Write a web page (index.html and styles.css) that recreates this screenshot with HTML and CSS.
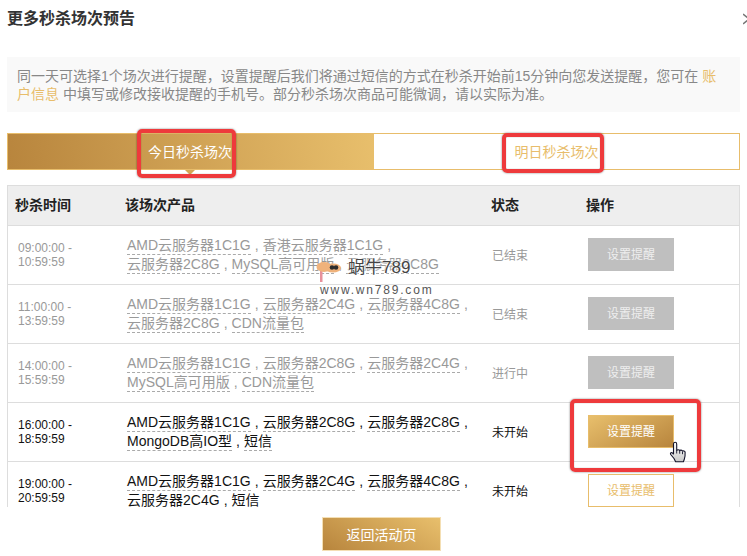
FILE: index.html
```html
<!DOCTYPE html>
<html lang="zh-CN">
<head>
<meta charset="utf-8">
<title>更多秒杀场次预告</title>
<link rel="stylesheet" href="styles.css">
</head>
<body>
<div class="modal">
  <header class="head">
    <h1 class="title">更多秒杀场次预告</h1>
    <svg class="close" width="6" height="12" viewBox="0 0 6 12"><path d="M0 1l6 5-6 5" fill="none" stroke="#777" stroke-width="1.500"/></svg>
  </header>
  <p class="notice">同一天可选择1个场次进行提醒，设置提醒后我们将通过短信的方式在秒杀开始前15分钟向您发送提醒，您可在 <a class="link">账户信息</a> 中填写或修改接收提醒的手机号。部分秒杀场次商品可能微调，请以实际为准。</p>
  <div class="tabs">
    <div class="tab tab-on">今日秒杀场次</div>
    <div class="tab">明日秒杀场次</div>
  </div>
  <div class="scroll">
    <table class="grid">
      <colgroup><col class="c1"><col class="c2"><col class="c3"><col class="c4"></colgroup>
      <thead>
        <tr><th>秒杀时间</th><th>该场次产品</th><th>状态</th><th>操作</th></tr>
      </thead>
      <tbody>
        <tr class="past">
          <td class="time">09:00:00 - 10:59:59</td>
          <td class="prod"><span class="item">AMD云服务器1C1G</span><span class="sep">,</span><span class="item">香港云服务器1C1G</span><span class="sep">,</span><span class="item">云服务器2C8G</span><span class="sep">,</span><span class="item">MySQL高可用版</span><span class="sep">,</span><span class="item">云服务器2C8G</span></td>
          <td class="state">已结束</td>
          <td class="act"><button class="btn btn-off">设置提醒</button></td>
        </tr>
        <tr class="past">
          <td class="time">11:00:00 - 13:59:59</td>
          <td class="prod"><span class="item">AMD云服务器1C1G</span><span class="sep">,</span><span class="item">云服务器2C4G</span><span class="sep">,</span><span class="item">云服务器4C8G</span><span class="sep">,</span><span class="item">云服务器2C8G</span><span class="sep">,</span><span class="item">CDN流量包</span></td>
          <td class="state">已结束</td>
          <td class="act"><button class="btn btn-off">设置提醒</button></td>
        </tr>
        <tr class="past">
          <td class="time">14:00:00 - 15:59:59</td>
          <td class="prod"><span class="item">AMD云服务器1C1G</span><span class="sep">,</span><span class="item">云服务器2C8G</span><span class="sep">,</span><span class="item">云服务器2C4G</span><span class="sep">,</span><span class="item">MySQL高可用版</span><span class="sep">,</span><span class="item">CDN流量包</span></td>
          <td class="state">进行中</td>
          <td class="act"><button class="btn btn-off">设置提醒</button></td>
        </tr>
        <tr>
          <td class="time">16:00:00 - 18:59:59</td>
          <td class="prod"><span class="item">AMD云服务器1C1G</span><span class="sep">,</span><span class="item">云服务器2C8G</span><span class="sep">,</span><span class="item">云服务器2C8G</span><span class="sep">,</span><span class="item">MongoDB高IO型</span><span class="sep">,</span><span class="item">短信</span></td>
          <td class="state">未开始</td>
          <td class="act"><button class="btn btn-hover">设置提醒</button></td>
        </tr>
        <tr>
          <td class="time">19:00:00 - 20:59:59</td>
          <td class="prod"><span class="item">AMD云服务器1C1G</span><span class="sep">,</span><span class="item">云服务器2C4G</span><span class="sep">,</span><span class="item">云服务器4C8G</span><span class="sep">,</span><span class="item">云服务器2C4G</span><span class="sep">,</span><span class="item">短信</span></td>
          <td class="state">未开始</td>
          <td class="act"><button class="btn btn-line">设置提醒</button></td>
        </tr>
      </tbody>
    </table>
  </div>
  <footer class="foot"><button class="back">返回活动页</button></footer>
</div>

<div class="mark mark-a"></div>
<div class="mark mark-b"></div>
<div class="mark mark-c"></div>

<div class="wm">
  <svg class="wm-fish" width="28" height="22" viewBox="0 0 28 22">
    <rect x="4" y="8" width="2.500" height="13" fill="#e8919b"/>
    <ellipse cx="8" cy="6" rx="7.500" ry="5" fill="#efb27b"/>
    <ellipse cx="17" cy="7" rx="8" ry="4.500" fill="#efb27b"/>
    <circle cx="16" cy="6.500" r="2.300" fill="#2c2c2c"/>
    <circle cx="20" cy="6.500" r="2.300" fill="#2c2c2c"/>
  </svg>
  <span class="wm-name">蜗牛789</span>
  <span class="wm-url">www.wn789.com</span>
</div>

<svg class="hand" width="20" height="24" viewBox="0 0 20 24">
  <defs><linearGradient id="hg" x1="0" y1="0" x2="0" y2="1"><stop offset="0" stop-color="#fff"/><stop offset="1" stop-color="#c9c9c9"/></linearGradient></defs>
  <path d="M4.500 3c0-1 .7-1.800 1.600-1.800S7.700 2 7.700 3v6.500c.3-.9 2.600-1 3 .2.400-.8 2.400-.8 2.800.5.500-.6 2.400-.4 2.600 1 .1 1.500 0 5-.8 7l-.9 2.600H6.600L5 17.500 1.700 13.500c-.7-1 .1-2.300 1.300-1.800L4.500 13z" fill="url(#hg)" stroke="#14142b" stroke-width="1.100" stroke-linejoin="round"/>
  <path d="M7.700 9.500v3M10.700 9.700v3M13.500 10.700v2.500" fill="none" stroke="#14142b" stroke-width=".9"/>
</svg>
</body>
</html>
```
FILE: styles.css
```css
* { box-sizing: border-box; }
html, body { margin: 0; padding: 0; background: #fff; }
body {
  width: 747px;
  height: 556px;
  overflow: hidden;
  position: relative;
  font-family: "Liberation Sans", "Noto Sans CJK SC", sans-serif;
  color: #222;
}
.modal { padding: 0 7px; }
.head { height: 34px; display: flex; align-items: center; justify-content: space-between; margin-right: -7px; }
.title { margin: 0; font-size: 16px; font-weight: 700; color: #333; }
.close { flex: none; margin-top: 4px; margin-right: -2px; }
.notice {
  margin: 23px 0 0;
  height: 55px;
  padding: 10px 10px 9px;
  background: #f9f9f9;
  font-size: 14px;
  line-height: 18px;
  color: #888;
}
.link { color: #e8bd6b; }
.tabs { display: flex; height: 37px; margin-top: 21px; }
.tab {
  flex: 1;
  position: relative;
  display: flex;
  align-items: center;
  justify-content: center;
  border: 1px solid #e8bd6b;
  font-size: 14px;
  color: #e8bd6b;
  padding-bottom: 2px;
}
.tab-on {
  flex: none;
  width: 367px;
  color: #fff;
  border-right: 0;
  padding-right: 2px;
  background: linear-gradient(80deg, #b8853d, #e8bf6c);
}
.tab-on::after {
  content: "";
  position: absolute;
  left: 177px;
  top: 36px;
  border: 5px solid transparent;
  border-top-color: #d4a655;
  border-bottom: 0;
}
.tab-on + .tab { border-left: 0; }
.scroll {
  margin-top: 15px;
  height: 322px;
  overflow: hidden;
  border: 1px solid #ddd;
  border-bottom: 0;
}
.grid { width: 731px; border-spacing: 0; table-layout: fixed; }
.c1 { width: 110px; }
.c2 { width: 366px; }
.c3 { width: 95px; }
.c4 { width: 160px; }
th {
  height: 40px;
  padding: 0 0 3px 7px;
  background: #eee;
  border-bottom: 1px solid #ddd;
  text-align: left;
  font-size: 14px;
  font-weight: 700;
  color: #222;
}
td {
  height: 59px;
  padding: 0 0 0 9px;
  border-bottom: 1px solid #ddd;
  font-size: 12px;
  color: #111;
}
.past td { color: #999; }
.time { padding: 0 22px 0 10px; line-height: 14.500px; }
.prod { font-size: 14px; line-height: 19px; padding: 0 6px 0 9px; }
.item { display: inline-block; height: 18px; line-height: 17px; border-bottom: 1px dashed #aaa; }
.sep { display: inline-block; width: 12px; text-align: center; line-height: 14px; }
.state { padding: 0 0 1px 8px; }
.act { padding-bottom: 1px; }
.btn {
  display: block;
  width: 86px;
  height: 33px;
  padding: 0 0 2px;
  margin: 0;
  border: 1px solid transparent;
  font: inherit;
  font-size: 12px;
  color: #fff;
}
.btn-off { background: #bfbfbf; color: #eee; }
.btn-hover { border-color: #e8bd6b; background: linear-gradient(150deg, #e8bf6c, #b8853d); }
.btn-line { background: #fff; border-color: #e8bd6b; color: #e8bd6b; }
.foot { display: flex; justify-content: center; margin-top: 10px; padding-left: 16px; }
.back {
  width: 119px;
  height: 34px;
  padding: 0;
  border: 1px solid #f4dfb4;
  background: linear-gradient(30deg, #b8853d, #e8bf6c);
  font: inherit;
  font-size: 14px;
  color: #fff;
}
.mark {
  position: absolute;
  border: 4px solid #ee3a3c;
  border-radius: 5px;
  box-shadow: 0 0 2px rgba(0, 0, 0, .55), inset 0 0 1px rgba(0, 0, 0, .5);
}
.mark-a { left: 137px; top: 129px; width: 99px; height: 49px; }
.mark-b { left: 502px; top: 133px; width: 102px; height: 40px; }
.mark-c { left: 570px; top: 399px; width: 131px; height: 73px; }
.wm { position: absolute; left: 316px; top: 260px; width: 125px; height: 42px; }
.wm-fish { position: absolute; left: 0; top: 1px; }
.wm-name {
  position: absolute;
  left: 32px;
  top: -2px;
  font-size: 17px;
  line-height: 20px;
  color: #444;
  text-shadow: 0 0 2px #fff, 0 0 2px #fff, 0 0 3px #fff;
}
.wm-url {
  position: absolute;
  left: 4px;
  top: 22px;
  font-size: 12px;
  line-height: 16px;
  letter-spacing: 1.800px;
  color: #555;
  text-shadow: 0 0 2px #fff;
}
.hand { position: absolute; left: 669px; top: 441px; }
```
